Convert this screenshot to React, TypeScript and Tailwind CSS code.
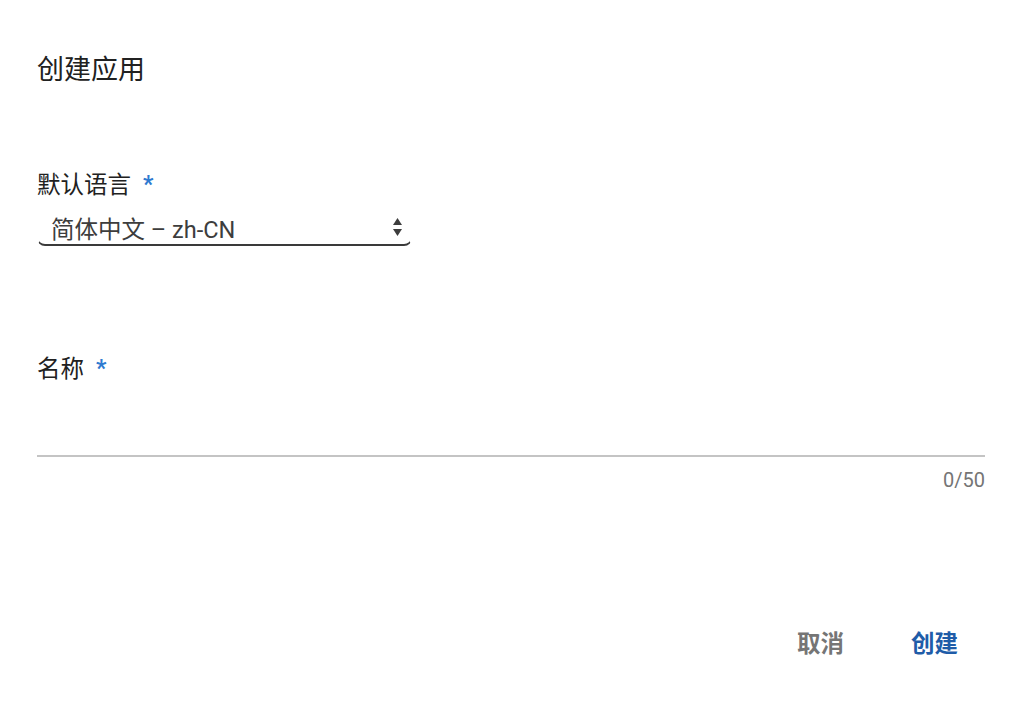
import React from "react";

export default function App() {
  const font = { fontFamily: '"Roboto", "Noto Sans CJK SC", sans-serif' };
  return (
    <div className="w-[1024px] h-[710px] bg-white flex flex-col pl-[37px] pr-[39px] text-[#212121]" style={font}>
      <h1 className="mt-[52px] text-[27px] leading-[36px] font-normal text-[#212121]">创建应用</h1>

      <div className="mt-[81px] flex items-center text-[23.5px] leading-[32px] text-[#212121]">
        <span>默认语言</span>
        <span className="ml-[12px] text-[#2f7ad0] text-[23px] font-bold">*</span>
      </div>

      <div className="mt-[11px] w-[375px] h-[34px] flex items-center justify-between pt-[4px] pl-[13px] pr-[8px] border-b-[2px] border-x-[1.5px] border-t-0 border-b-[#3a3a3a] border-x-[#3a3a3a] rounded-b-[8px] [border-left-color:transparent] [border-right-color:transparent]">
        <span className="text-[23.5px] leading-[30px] text-[#3d3d3d]">简体中文 – zh-CN</span>
        <svg width="11" height="20" viewBox="0 0 11 20" className="mb-[6px]">
          <path d="M5.5 1 L10 8 L1 8 Z" fill="#3d3d3d" />
          <path d="M5.5 19 L10 12 L1 12 Z" fill="#3d3d3d" />
        </svg>
      </div>

      <div className="mt-[107px] flex items-center text-[23.5px] leading-[32px] text-[#212121]">
        <span>名称</span>
        <span className="ml-[12px] text-[#2f7ad0] text-[23px] font-bold">*</span>
      </div>

      <div className="mt-[70px] h-[2px] bg-[#c4c4c4]" />

      <div className="mt-[11px] text-right text-[20px] leading-[24px] text-[#757575]">0/50</div>

      <div className="mt-[136px] flex justify-end items-center leading-[32px]">
        <button className="text-[23.5px] font-bold text-[#757575] mr-[67px]">取消</button>
        <button className="text-[23.5px] font-bold text-[#1f5ca8] mr-[27px]">创建</button>
      </div>
    </div>
  );
}
